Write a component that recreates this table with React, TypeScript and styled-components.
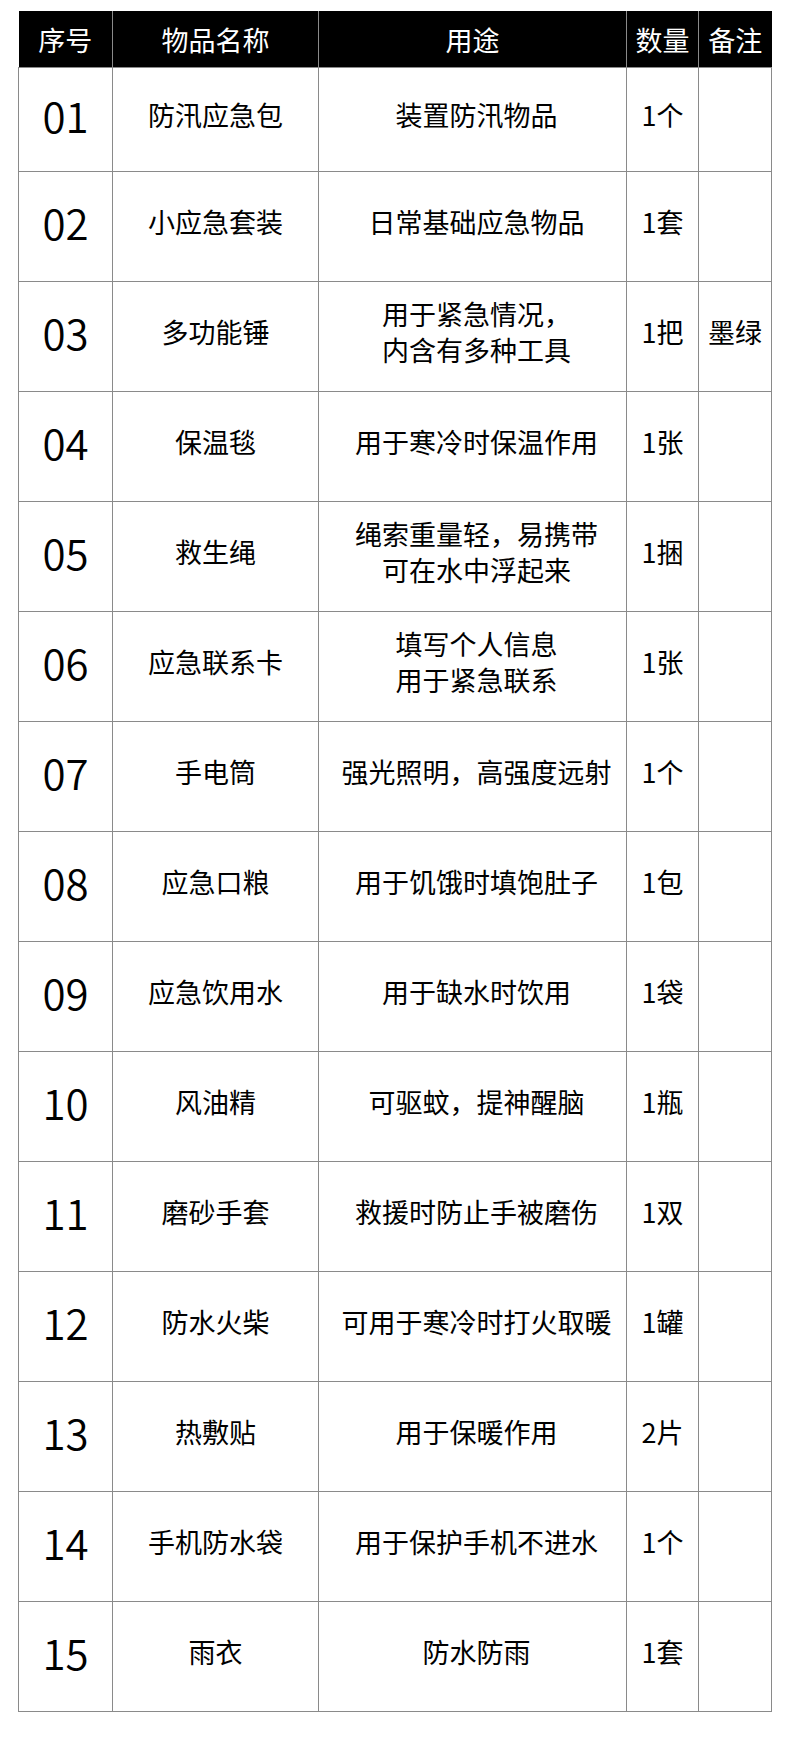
import React from 'react';
import styled, { createGlobalStyle } from 'styled-components';

interface Item {
  no: string;
  name: string;
  usage: string[];
  qty: string;
  note?: string;
}

const items: Item[] = [
  { no: '01', name: '防汛应急包', usage: ['装置防汛物品'], qty: '1个' },
  { no: '02', name: '小应急套装', usage: ['日常基础应急物品'], qty: '1套' },
  { no: '03', name: '多功能锤', usage: ['用于紧急情况，', '内含有多种工具'], qty: '1把', note: '墨绿' },
  { no: '04', name: '保温毯', usage: ['用于寒冷时保温作用'], qty: '1张' },
  { no: '05', name: '救生绳', usage: ['绳索重量轻，易携带', '可在水中浮起来'], qty: '1捆' },
  { no: '06', name: '应急联系卡', usage: ['填写个人信息', '用于紧急联系'], qty: '1张' },
  { no: '07', name: '手电筒', usage: ['强光照明，高强度远射'], qty: '1个' },
  { no: '08', name: '应急口粮', usage: ['用于饥饿时填饱肚子'], qty: '1包' },
  { no: '09', name: '应急饮用水', usage: ['用于缺水时饮用'], qty: '1袋' },
  { no: '10', name: '风油精', usage: ['可驱蚊，提神醒脑'], qty: '1瓶' },
  { no: '11', name: '磨砂手套', usage: ['救援时防止手被磨伤'], qty: '1双' },
  { no: '12', name: '防水火柴', usage: ['可用于寒冷时打火取暖'], qty: '1罐' },
  { no: '13', name: '热敷贴', usage: ['用于保暖作用'], qty: '2片' },
  { no: '14', name: '手机防水袋', usage: ['用于保护手机不进水'], qty: '1个' },
  { no: '15', name: '雨衣', usage: ['防水防雨'], qty: '1套' },
];

const GlobalStyle = createGlobalStyle`
  html, body {
    margin: 0;
    padding: 0;
    background: #ffffff;
  }
  body {
    font-family: "Noto Sans CJK SC", "Noto Sans", sans-serif;
    color: #000000;
  }
`;

const Page = styled.div`
  width: 790px;
  height: 1759px;
  padding: 11px 0 0 18px;
  box-sizing: border-box;
`;

const Table = styled.table`
  width: 753px;
  border-collapse: collapse;
  table-layout: fixed;
`;

const HeadCell = styled.th`
  height: 56px;
  padding: 0;
  background: #000000;
  color: #ffffff;
  font-size: 27px;
  font-weight: 400;
  line-height: 1;
  text-align: center;
  vertical-align: middle;
  border-left: 1px solid #8a8a8a;
  &:first-child {
    border-left: none;
  }
`;

const Row = styled.tr<{ $first?: boolean }>`
  height: ${(p) => (p.$first ? '104px' : '110px')};
`;

const Cell = styled.td<{ $big?: boolean; $shift?: boolean }>`
  padding: 0 0 ${(p) => (p.$big ? '8px' : '10px')} ${(p) => (p.$shift ? '8px' : '0')};
  border: 1px solid #8a8a8a;
  text-align: center;
  vertical-align: middle;
  font-size: ${(p) => (p.$big ? '42px' : '27px')};
  font-weight: ${(p) => (p.$big ? 350 : 400)};
  line-height: ${(p) => (p.$big ? '1.2' : '36px')};
  white-space: nowrap;
`;

const Line = styled.div`
  display: block;
`;

export default function App() {
  return (
    <>
      <GlobalStyle />
      <Page>
        <Table>
          <colgroup>
            <col style={{ width: 94 }} />
            <col style={{ width: 206 }} />
            <col style={{ width: 308 }} />
            <col style={{ width: 72 }} />
            <col style={{ width: 73 }} />
          </colgroup>
          <thead>
            <tr>
              <HeadCell>序号</HeadCell>
              <HeadCell>物品名称</HeadCell>
              <HeadCell>用途</HeadCell>
              <HeadCell>数量</HeadCell>
              <HeadCell>备注</HeadCell>
            </tr>
          </thead>
          <tbody>
            {items.map((item, i) => (
              <Row key={item.no} $first={i === 0}>
                <Cell $big>{item.no}</Cell>
                <Cell>{item.name}</Cell>
                <Cell $shift>
                  {item.usage.map((u) => (
                    <Line key={u}>{u}</Line>
                  ))}
                </Cell>
                <Cell>{item.qty}</Cell>
                <Cell>{item.note ?? ''}</Cell>
              </Row>
            ))}
          </tbody>
        </Table>
      </Page>
    </>
  );
}
